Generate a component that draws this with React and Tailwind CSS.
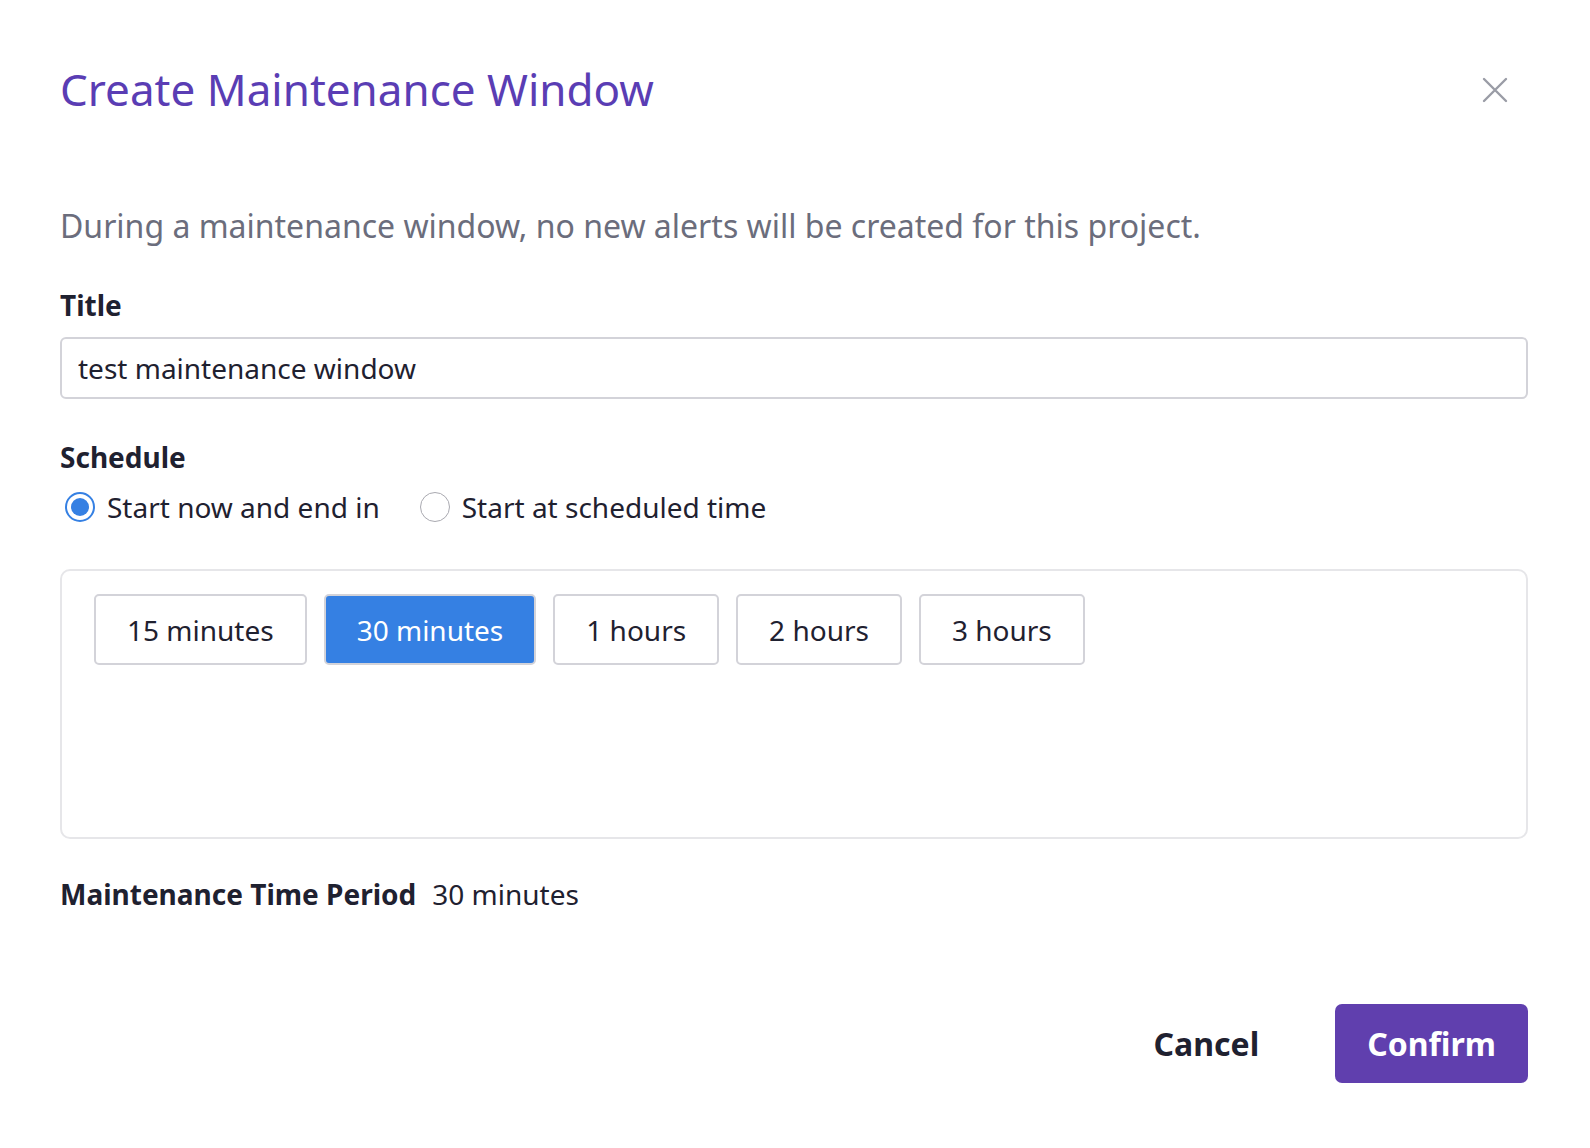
import React, { useState } from 'react';

const durations = ['15 minutes', '30 minutes', '1 hours', '2 hours', '3 hours'];

const Radio = ({ checked, label, onClick }) => (
  <button type="button" onClick={onClick} className="flex items-center gap-[12px]">
    <span
      className={
        checked
          ? 'flex h-[30px] w-[30px] items-center justify-center rounded-full border-2 border-[#3580e3] bg-white'
          : 'flex h-[30px] w-[30px] items-center justify-center rounded-full border-[1.5px] border-[#a9a9b0] bg-white'
      }
    >
      {checked && <span className="h-[18px] w-[18px] rounded-full bg-[#3580e3]" />}
    </span>
    <span className="text-[28px] leading-[36px] text-[#1f2130]">{label}</span>
  </button>
);

const App = () => {
  const [title, setTitle] = useState('test maintenance window');
  const [mode, setMode] = useState('now');
  const [duration, setDuration] = useState('30 minutes');

  return (
    <div
      className="min-h-[1148px] w-full bg-white pl-[60px] pr-[62px] pt-[63px]"
      style={{ fontFamily: '"Noto Sans", "Open Sans", sans-serif' }}
    >
      <div className="flex items-center justify-between">
        <h1 className="text-[44px] leading-[53px] text-[#5a3db4]">Create Maintenance Window</h1>
        <button type="button" className="mr-[20px] text-[#9a9ca6]">
          <svg width="26" height="26" viewBox="0 0 26 26" fill="none" stroke="currentColor" strokeWidth="2.4" strokeLinecap="round">
            <path d="M2 2L24 24M24 2L2 24" />
          </svg>
        </button>
      </div>

      <p className="mt-[90px] text-[32px] leading-[40px] text-[#6b6d7c]">
        During a maintenance window, no new alerts will be created for this project.
      </p>

      <label className="mt-[41px] block text-[28px] font-bold leading-[36px] text-[#1f2130]">Title</label>
      <input
        value={title}
        onChange={(e) => setTitle(e.target.value)}
        className="mt-[14px] block h-[62px] w-full rounded-[6px] border-2 border-[#d3d3d9] px-[16px] text-[28px] text-[#1f2130] outline-none"
      />

      <div className="mt-[40px] text-[28px] font-bold leading-[36px] text-[#1f2130]">Schedule</div>
      <div className="mt-[14px] flex items-center gap-[40px] pl-[5px]">
        <Radio checked={mode === 'now'} label="Start now and end in" onClick={() => setMode('now')} />
        <Radio checked={mode === 'scheduled'} label="Start at scheduled time" onClick={() => setMode('scheduled')} />
      </div>

      <div className="mt-[44px] h-[270px] rounded-[10px] border-2 border-[#e6e6e9] px-[32px] pt-[23px]">
        <div className="flex gap-[17px]">
          {durations.map((d) => (
            <button
              key={d}
              type="button"
              onClick={() => setDuration(d)}
              className={
                d === duration
                  ? 'h-[71px] rounded-[5px] border-2 border-[#d3d3d9] bg-[#3580e3] px-[31px] text-[28px] text-white'
                  : 'h-[71px] rounded-[5px] border-2 border-[#d3d3d9] bg-white px-[31px] text-[28px] text-[#1f2130]'
              }
            >
              {d}
            </button>
          ))}
        </div>
      </div>

      <div className="mt-[37px] flex items-center gap-[16px]">
        <span className="text-[28px] font-bold leading-[36px] text-[#1f2130]">Maintenance Time Period</span>
        <span className="text-[28px] leading-[36px] text-[#1f2130]">{duration}</span>
      </div>

      <div className="mt-[92px] flex items-center justify-end gap-[76px]">
        <button type="button" className="text-[32px] font-bold text-[#1f2130]">Cancel</button>
        <button
          type="button"
          className="h-[79px] rounded-[7px] bg-[#603fae] px-[32px] text-[32px] font-bold text-white"
        >
          Confirm
        </button>
      </div>
    </div>
  );
};

export default App;
